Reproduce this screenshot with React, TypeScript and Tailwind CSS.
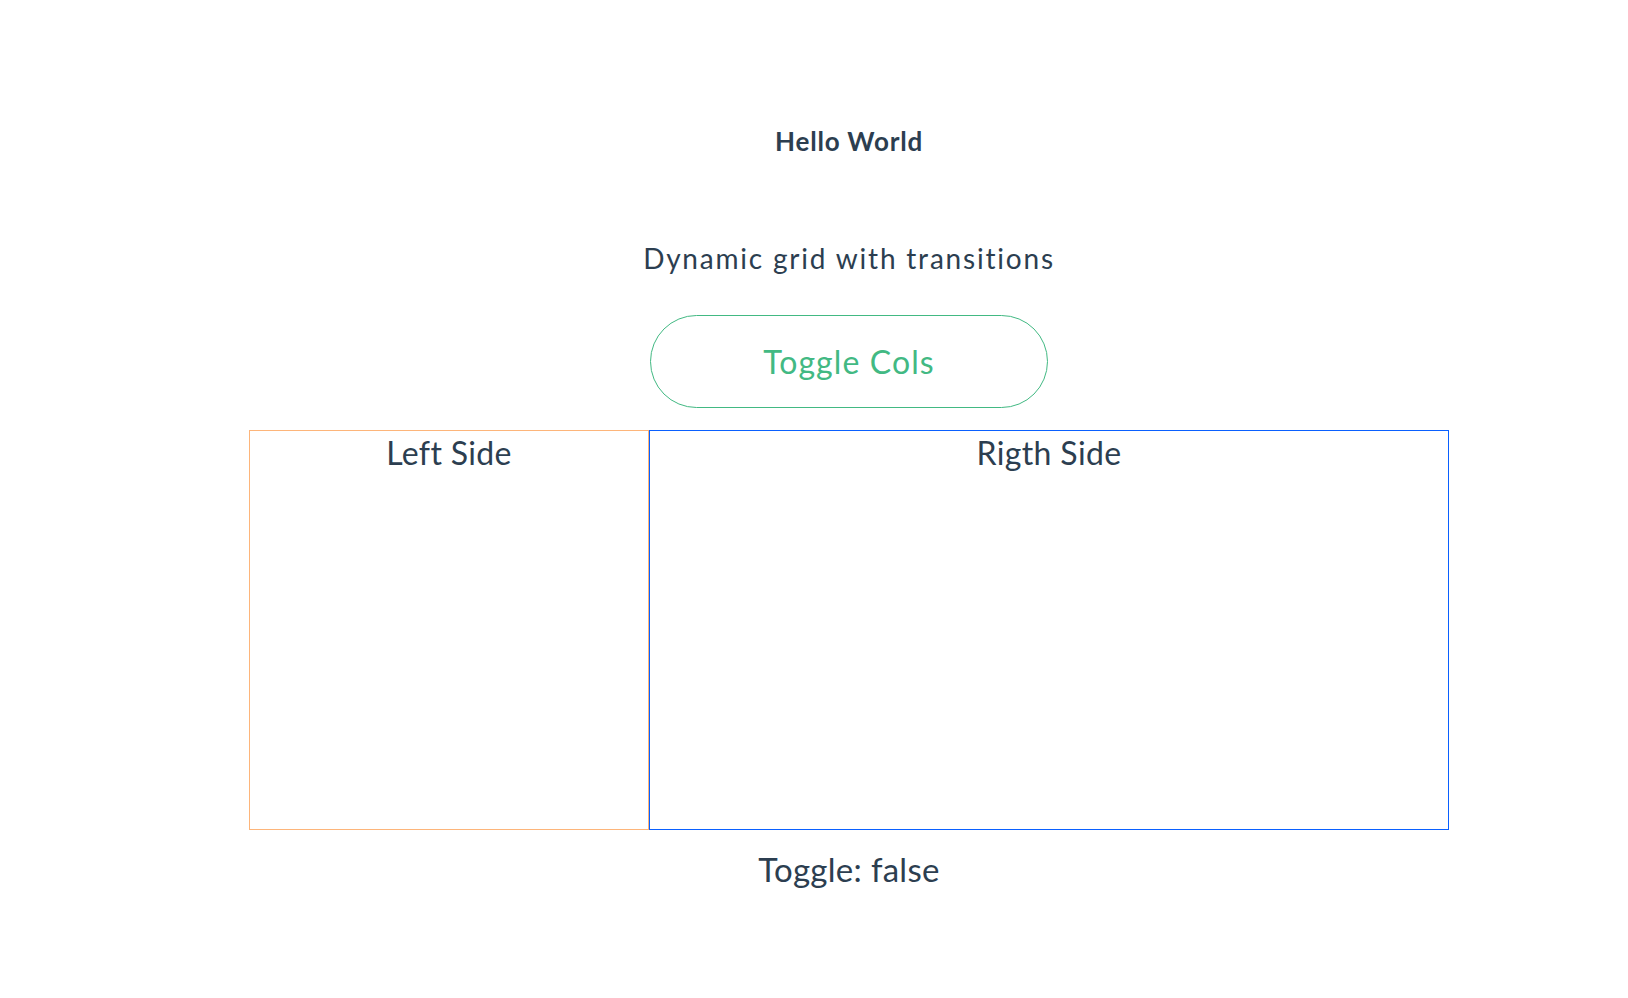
import { useState } from 'react';

export default function App() {
  const [toggle, setToggle] = useState(false);

  return (
    <div
      className="min-h-screen bg-white pl-[70px] text-center text-[#2c3e50]"
      style={{ fontFamily: 'Lato, "Noto Sans", sans-serif' }}
    >
      <h1 className="pt-[125px] text-[26px] font-bold leading-[32px] tracking-[0.8px]">Hello World</h1>
      <p className="mt-[83px] text-[28px] leading-[36px] tracking-[1.8px]">Dynamic grid with transitions</p>
      <div className="mt-[39px] flex justify-center">
        <button
          className="h-[93px] w-[398px] cursor-pointer rounded-full border border-[#42b983] text-[32px] tracking-[1.1px] text-[#42b983]"
          onClick={() => setToggle(!toggle)}
          type="button"
        >
          Toggle Cols
        </button>
      </div>
      <div className="mt-[22px] flex justify-center">
        <div
          className={
            toggle
              ? 'grid h-[400px] w-[1200px] grid-cols-[2fr_1fr] transition-all'
              : 'grid h-[400px] w-[1200px] grid-cols-[1fr_2fr] transition-all'
          }
        >
          <div className="border border-[#fdb57a] pt-[2px] text-[32px] leading-[40px] tracking-[0.35px]">Left Side</div>
          <div className="border border-[#0a60ff] pt-[2px] text-[32px] leading-[40px] tracking-[0.35px]">Rigth Side</div>
        </div>
      </div>
      <p className="mt-[19px] text-[33px] leading-[40px] tracking-[0.3px]">Toggle: {toggle ? 'true' : 'false'}</p>
    </div>
  );
}
